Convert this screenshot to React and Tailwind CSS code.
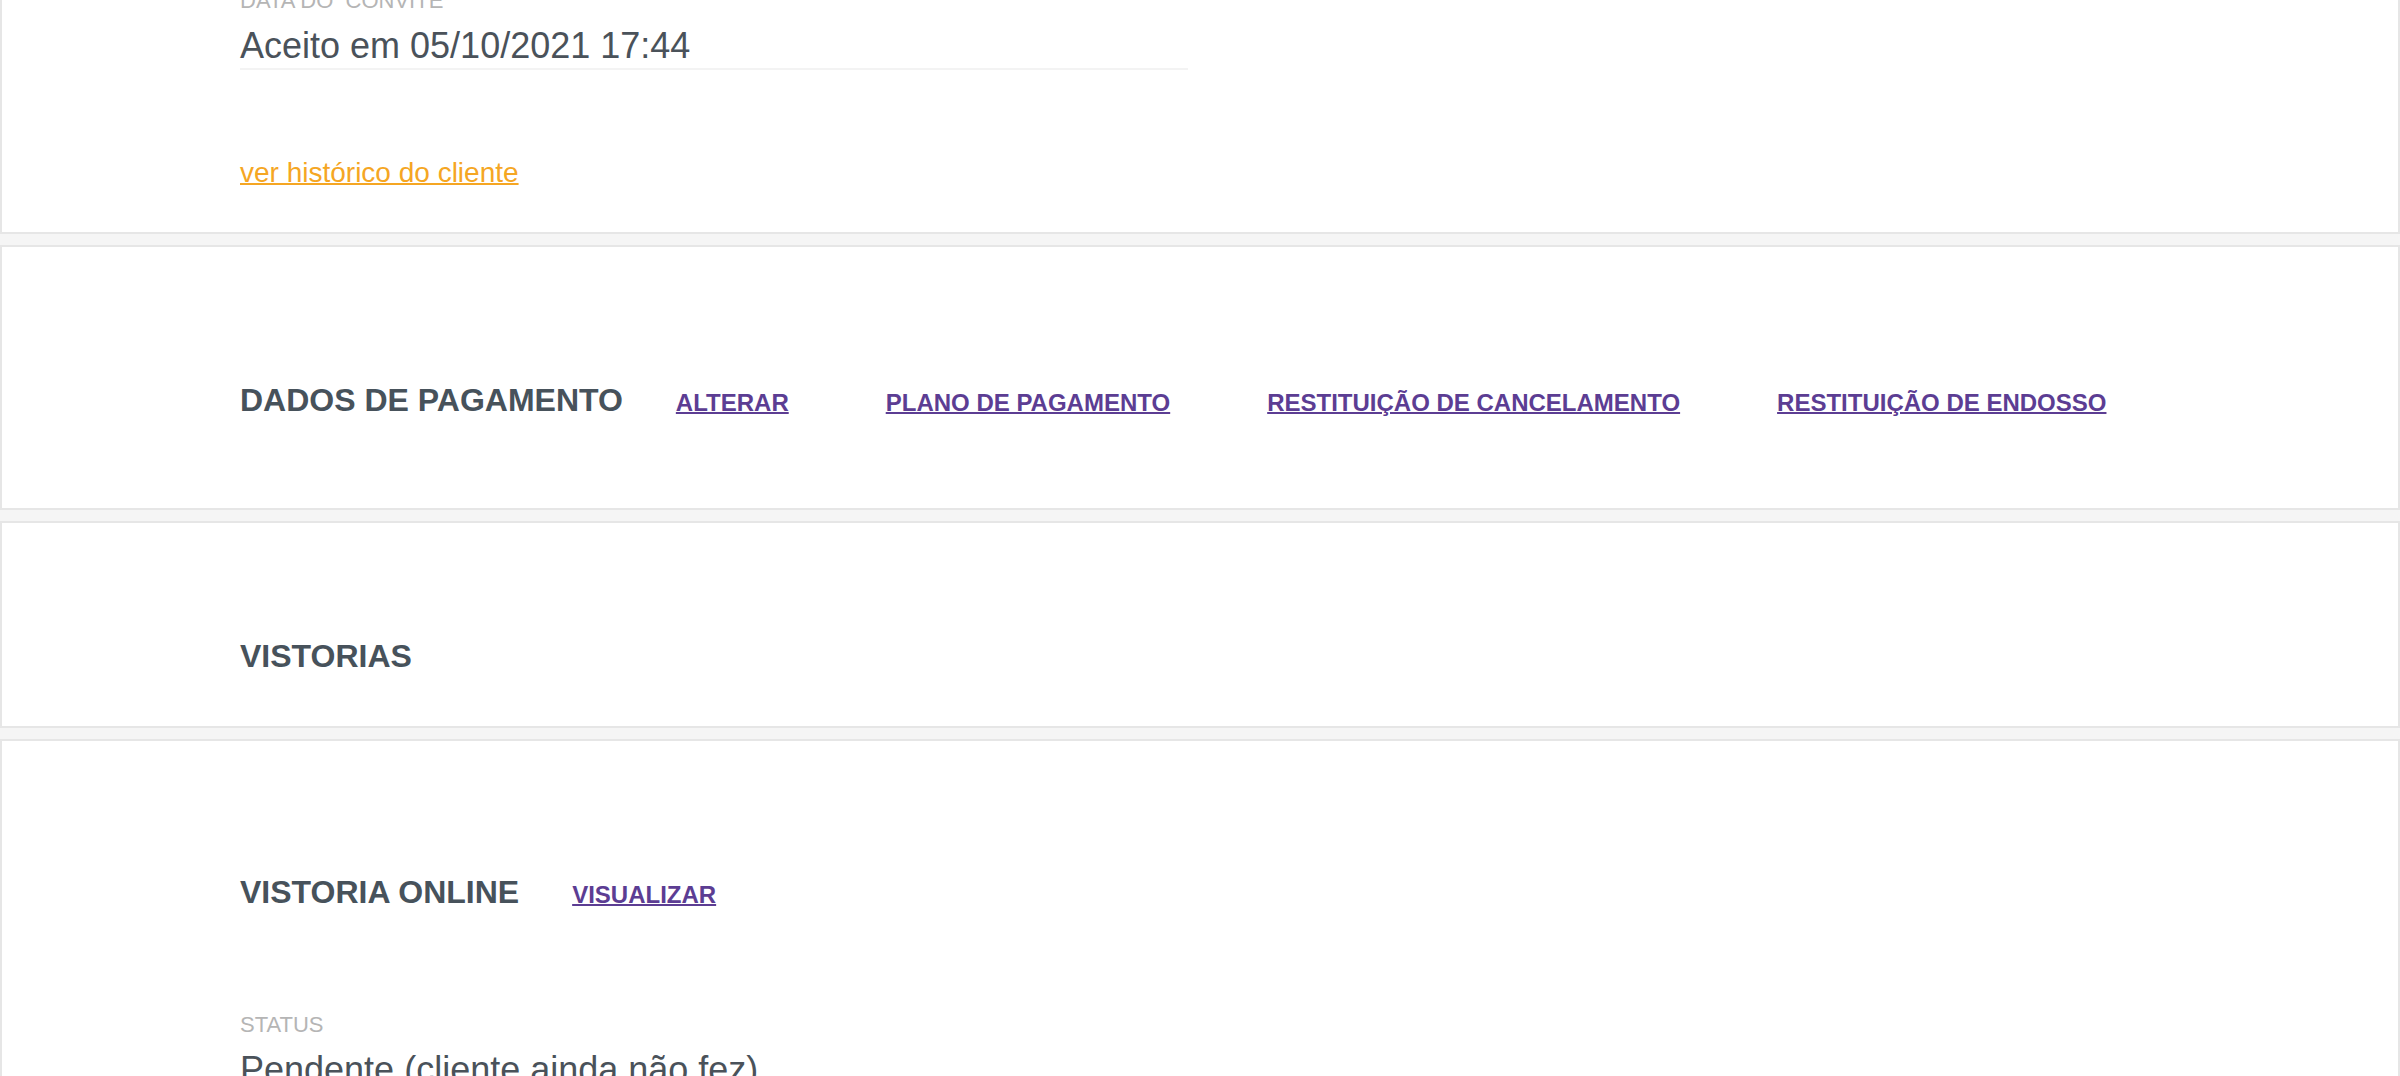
import React from "react";

const font = { fontFamily: '"Liberation Sans", Arial, Helvetica, sans-serif' };

function Card({ className = "", children }) {
  return (
    <div className={`bg-white border-2 border-[#e6e6e6] pl-[238px] ${className}`}>
      {children}
    </div>
  );
}

function Title({ children }) {
  return (
    <h2 className="text-[32px] leading-[32px] font-bold text-[#47525b] whitespace-nowrap">
      {children}
    </h2>
  );
}

function LinkA({ children }) {
  return (
    <a
      href="#"
      className="text-[24px] leading-[24px] font-bold text-[#5c3d93] underline decoration-2 whitespace-nowrap"
    >
      {children}
    </a>
  );
}

function Label({ children }) {
  return (
    <div className="text-[22px] leading-[22px] text-[#b5b5b5] uppercase mb-[16px] whitespace-nowrap">
      {children}
    </div>
  );
}

function Value({ children, underline }) {
  return (
    <div
      className={`text-[36px] leading-[36px] text-[#4a525a] whitespace-nowrap ${
        underline ? "pb-[4px] border-b-2 border-[#f3f3f3]" : ""
      }`}
    >
      {children}
    </div>
  );
}

export default function App() {
  return (
    <div className="min-h-screen bg-[#f5f5f5] overflow-hidden" style={font}>
      <div className="-mt-[52px] flex flex-col gap-[11px]">
        <Card className="pt-[40px] pb-[43px]">
          <div className="w-[948px]">
            <Label>Data do&nbsp;&nbsp;convite</Label>
            <Value underline>Aceito em 05/10/2021 17:44</Value>
          </div>
          <div className="mt-[89px]">
            <a
              href="#"
              className="text-[28px] leading-[28px] text-[#f5a623] underline decoration-2"
            >
              ver histórico do cliente
            </a>
          </div>
        </Card>

        <Card className="pt-[137px] pb-[92px]">
          <div className="flex items-baseline">
            <Title>DADOS DE PAGAMENTO</Title>
            <div className="ml-[53px] flex items-baseline gap-[97px]">
              <LinkA>ALTERAR</LinkA>
              <LinkA>PLANO DE PAGAMENTO</LinkA>
              <LinkA>RESTITUIÇÃO DE CANCELAMENTO</LinkA>
              <LinkA>RESTITUIÇÃO DE ENDOSSO</LinkA>
            </div>
          </div>
        </Card>

        <Card className="pt-[117px] pb-[54px]">
          <Title>VISTORIAS</Title>
        </Card>

        <Card className="pt-[135px] pb-[60px]">
          <div className="flex items-baseline">
            <Title>VISTORIA ONLINE</Title>
            <div className="ml-[53px] flex items-baseline">
              <LinkA>VISUALIZAR</LinkA>
            </div>
          </div>
          <div className="mt-[106px] w-[948px]">
            <Label>Status</Label>
            <Value>Pendente (cliente ainda não fez)</Value>
          </div>
        </Card>
      </div>
    </div>
  );
}
